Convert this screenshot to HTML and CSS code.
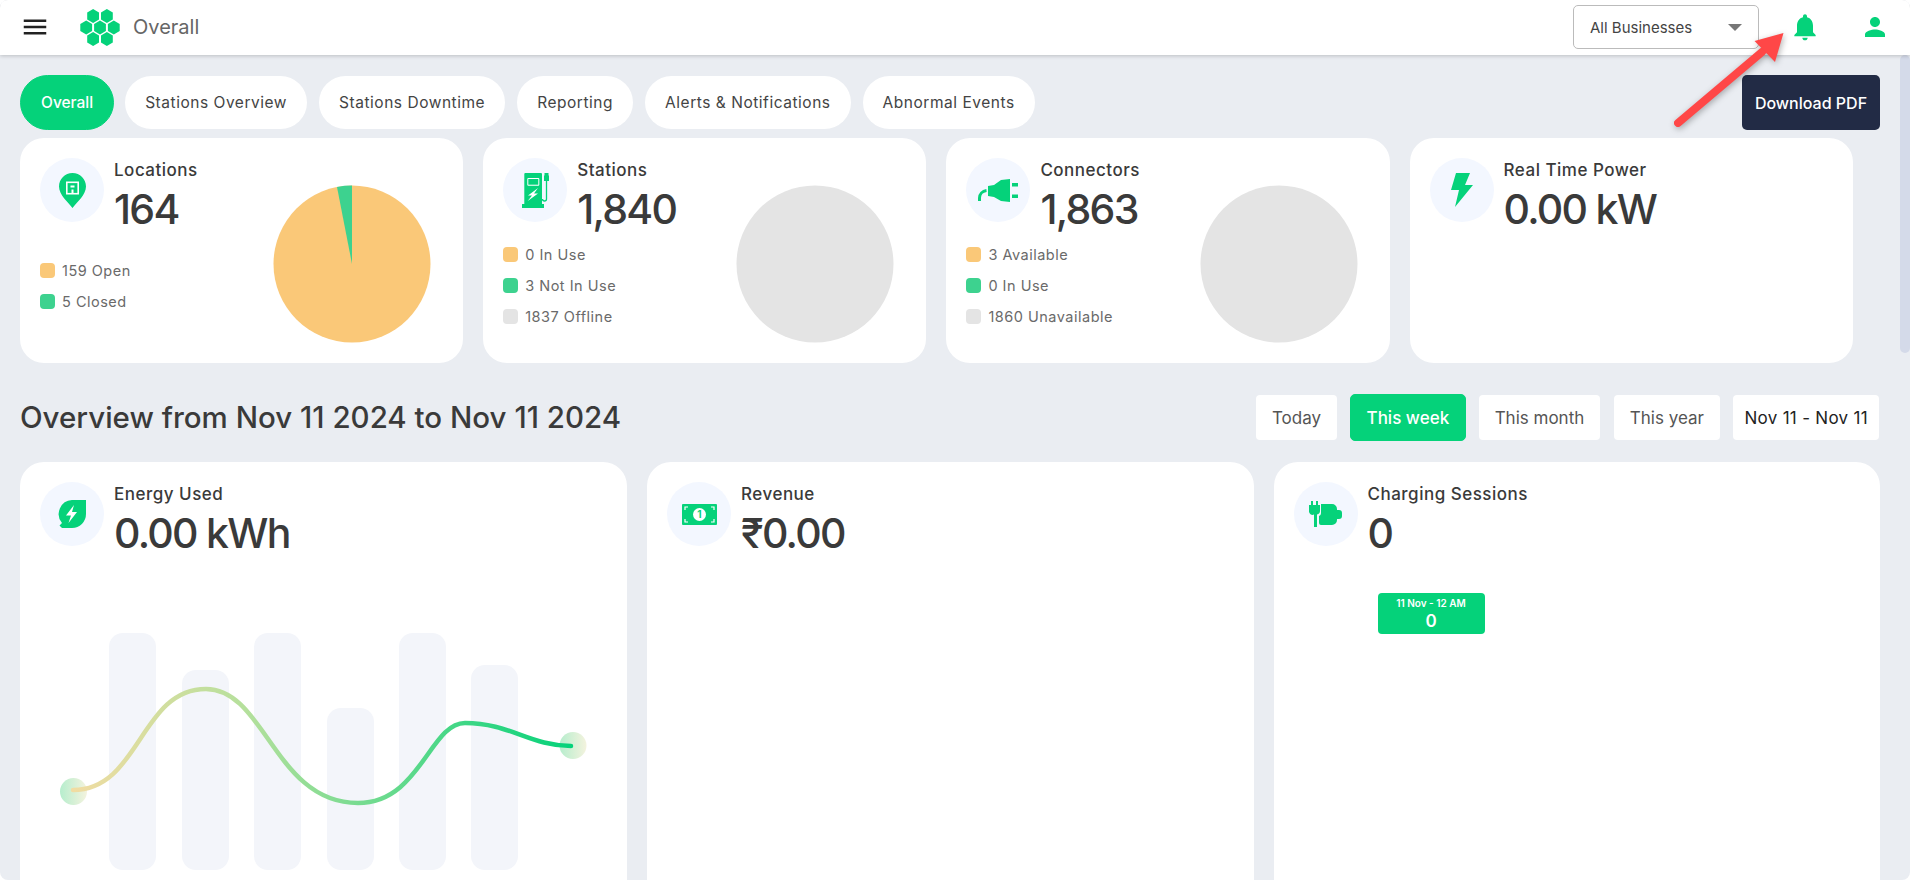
FILE: index.html
```html
<!DOCTYPE html>
<html lang="en">

<head>
    <meta charset="UTF-8">
    <meta name="viewport" content="width=device-width, initial-scale=1.0">
    <title>Overall</title>
    <link rel="stylesheet" href="styles.css">
</head>

<body>
    <div class="app">
        <header class="topbar">
            <svg class="menu-icon" viewBox="0 0 24 24"><path d="M3 18h18v-2H3v2zm0-5h18v-2H3v2zm0-7v2h18V6H3z"/></svg>
            <svg class="logo" viewBox="0 0 40 37">
                <defs><polygon id="hex" points="0,-6.900 5.900,-3.450 5.900,3.450 0,6.900 -5.900,3.450 -5.900,-3.450"/></defs>
                <use href="#hex" x="13.100" y="7"/>
                <use href="#hex" x="26.900" y="7"/>
                <use href="#hex" x="6.200" y="18.500"/>
                <use href="#hex" x="20" y="18.500"/>
                <use href="#hex" x="33.800" y="18.500"/>
                <use href="#hex" x="13.100" y="30"/>
                <use href="#hex" x="26.900" y="30"/>
            </svg>
            <span class="page-title">Overall</span>
            <div class="business-select">All Businesses<span class="caret"></span></div>
            <svg class="bell-icon" viewBox="0 0 24 24"><path d="M12 22c1.100 0 2-.9 2-2h-4c0 1.100.89 2 2 2zm6-6v-5c0-3.070-1.640-5.640-4.500-6.320V4c0-.83-.67-1.500-1.500-1.500s-1.500.67-1.500 1.500v.68C7.630 5.360 6 7.920 6 11v5l-2 2v1h16v-1l-2-2z"/></svg>
            <svg class="user-icon" viewBox="0 0 24 24"><path d="M12 12c2.210 0 4-1.790 4-4s-1.790-4-4-4-4 1.790-4 4 1.790 4 4 4zm0 2c-2.670 0-8 1.340-8 4v2h16v-2c0-2.660-5.330-4-8-4z"/></svg>
        </header>

        <main class="content">
            <div class="tab-row">
                <nav class="tabs">
                    <a class="tab active">Overall</a>
                    <a class="tab">Stations Overview</a>
                    <a class="tab">Stations Downtime</a>
                    <a class="tab">Reporting</a>
                    <a class="tab">Alerts &amp; Notifications</a>
                    <a class="tab">Abnormal Events</a>
                </nav>
                <button class="download-btn">Download PDF</button>
            </div>

            <section class="summary-row">
                <div class="card summary-card">
                    <div class="card-left">
                        <div class="card-head">
                            <div class="icon-circle">
                                <svg width="27" height="35" viewBox="0 0 27 35">
                                    <path class="green" d="M13.500 0C6 0 0 6 0 13.500 0 22 9 29 13.500 35 18 29 27 22 27 13.500 27 6 21 0 13.500 0z"/>
                                    <rect x="7.800" y="9.300" width="11.400" height="11.400" fill="none" stroke="#fff" stroke-width="1.600"/>
                                    <rect x="11.500" y="12.500" width="4" height="2" class="white"/>
                                    <rect x="12.500" y="16.500" width="2" height="4" class="white"/>
                                </svg>
                            </div>
                            <div>
                                <div class="card-title">Locations</div>
                                <div class="card-value">164</div>
                            </div>
                        </div>
                        <ul class="legend">
                            <li><span class="swatch orange"></span>159 Open</li>
                            <li><span class="swatch mint"></span>5 Closed</li>
                        </ul>
                    </div>
                    <svg class="pie" viewBox="-80 -80 160 160">
                        <circle r="78.500" fill="#fac878"/>
                        <path d="M0 0L-15 -77.060A78.500 78.500 0 0 1 0 -78.500z" fill="#3dd28f"/>
                    </svg>
                </div>

                <div class="card summary-card">
                    <div class="card-left">
                        <div class="card-head">
                            <div class="icon-circle">
                                <svg width="27" height="35" viewBox="0 0 27 35">
                                    <path class="green" d="M2.300 1a1 1 0 0 1 1-1h15.700a1 1 0 0 1 1 1v30h2v4H0v-4h2.300z"/>
                                    <rect x="5.300" y="5" width="12" height="7.700" rx="1" class="white"/>
                                    <rect x="6.300" y="6" width="10" height="5.700" class="green"/>
                                    <path class="white" d="M16 15L6 22.500h4L5.700 28 16 20.500h-4z"/>
                                    <path d="M24.500 8v18a2 2 0 0 1-4 0" fill="none" stroke="#05d27a" stroke-width="1.300"/>
                                    <path class="green" d="M22.500 0h4v2.500h.5V8h-5V2.500h.5z"/>
                                </svg>
                            </div>
                            <div>
                                <div class="card-title">Stations</div>
                                <div class="card-value">1,840</div>
                            </div>
                        </div>
                        <ul class="legend">
                            <li><span class="swatch orange"></span>0 In Use</li>
                            <li><span class="swatch mint"></span>3 Not In Use</li>
                            <li><span class="swatch grey"></span>1837 Offline</li>
                        </ul>
                    </div>
                    <svg class="pie" viewBox="-80 -80 160 160"><circle r="78.500" fill="#e4e4e4"/></svg>
                </div>

                <div class="card summary-card">
                    <div class="card-left">
                        <div class="card-head">
                            <div class="icon-circle">
                                <svg width="40" height="23" viewBox="0 0 40 23">
                                    <path class="green" d="M10 7l6-1 7-5 9-1v23l-9-1-7-4-6-1z"/>
                                    <path class="green" d="M34 4h6v3.500h-6zM34 15.500h6v3.500h-6z"/>
                                    <path d="M1.500 22v-3c0-4 3-7 7-7.500" fill="none" stroke="#05d27a" stroke-width="3"/>
                                </svg>
                            </div>
                            <div>
                                <div class="card-title">Connectors</div>
                                <div class="card-value">1,863</div>
                            </div>
                        </div>
                        <ul class="legend">
                            <li><span class="swatch orange"></span>3 Available</li>
                            <li><span class="swatch mint"></span>0 In Use</li>
                            <li><span class="swatch grey"></span>1860 Unavailable</li>
                        </ul>
                    </div>
                    <svg class="pie" viewBox="-80 -80 160 160"><circle r="78.500" fill="#e4e4e4"/></svg>
                </div>

                <div class="card summary-card">
                    <div class="card-left">
                        <div class="card-head">
                            <div class="icon-circle">
                                <svg width="28" height="36" viewBox="0 0 28 36"><path class="green" d="M8 1h14l-5 12h8L7 35l4-17H3z"/></svg>
                            </div>
                            <div>
                                <div class="card-title">Real Time Power</div>
                                <div class="card-value">0.00 kW</div>
                            </div>
                        </div>
                    </div>
                </div>
            </section>

            <div class="overview-head">
                <h2>Overview from Nov 11 2024 to Nov 11 2024</h2>
                <div class="ranges">
                    <button class="range">Today</button>
                    <button class="range active">This week</button>
                    <button class="range">This month</button>
                    <button class="range">This year</button>
                    <button class="range date">Nov 11 - Nov 11</button>
                </div>
            </div>

            <section class="detail-row">
                <div class="card detail-card">
                    <div class="card-head">
                        <div class="icon-circle">
                            <svg width="28" height="28" viewBox="0 0 28 28">
                                <path class="green" d="M28 0v14a14 14 0 0 1-14 14H7.500L4 28 1.500 25.500 4 23A14 14 0 0 1 14 0z"/>
                                <path class="white" d="M16 5L8 15.500h5L10.500 23 19 12h-5z"/>
                            </svg>
                        </div>
                        <div>
                            <div class="card-title">Energy Used</div>
                            <div class="card-value">0.00 kWh</div>
                        </div>
                    </div>
                    <!-- viewBox uses page coordinates so bars line up with the card -->
                    <svg class="energy-chart" viewBox="40 560 567 320">
                        <defs>
                            <linearGradient id="lineGrad" gradientUnits="userSpaceOnUse" x1="73" y1="0" x2="571" y2="0">
                                <stop offset="0" stop-color="#f1dca2"/>
                                <stop offset="0.35" stop-color="#b4e09c"/>
                                <stop offset="1" stop-color="#05d27a"/>
                            </linearGradient>
                            <linearGradient id="dotGrad">
                                <stop offset="0" stop-color="#b6edcd"/>
                                <stop offset="1" stop-color="#f4f3de"/>
                            </linearGradient>
                        </defs>
                        <g fill="#f3f5fa">
                            <rect x="109" y="633" width="47" height="237" rx="14"/>
                            <rect x="182" y="670" width="47" height="200" rx="14"/>
                            <rect x="254" y="633" width="47" height="237" rx="14"/>
                            <rect x="327" y="708" width="47" height="162" rx="14"/>
                            <rect x="399" y="633" width="47" height="237" rx="14"/>
                            <rect x="471" y="665" width="47" height="205" rx="14"/>
                        </g>
                        <ellipse cx="73.500" cy="791.500" rx="13.500" ry="13.500" fill="url(#dotGrad)"/>
                        <ellipse cx="573" cy="745.500" rx="13.500" ry="13.500" fill="url(#dotGrad)"/>
                        <path d="M73 790C140 790 140 689 206 689C265 689 275 803 358 803C420 803 430 723 465 723C510 723 530 746 571 746" fill="none" stroke="url(#lineGrad)" stroke-width="4.500" stroke-linecap="round"/>
                    </svg>
                </div>

                <div class="card detail-card">
                    <div class="card-head">
                        <div class="icon-circle">
                            <svg width="35" height="21" viewBox="0 0 35 21">
                                <rect width="35" height="21" rx="1" class="green"/>
                                <circle cx="17.500" cy="10.500" r="6.500" class="white"/>
                                <path d="M3 6V3h3M32 6V3h-3M3 15v3h3M32 15v3h-3" fill="none" stroke="#fff" stroke-width="1.200"/>
                                <text x="17.500" y="14" text-anchor="middle" class="note-digit">1</text>
                            </svg>
                        </div>
                        <div>
                            <div class="card-title">Revenue</div>
                            <div class="card-value">₹0.00</div>
                        </div>
                    </div>
                </div>

                <div class="card detail-card sessions-card">
                    <div class="card-head">
                        <div class="icon-circle">
                            <svg width="33" height="26" viewBox="0 0 33 26">
                                <path class="green" d="M2 0h2v4h3V0h2v4h2v6a3.500 3.500 0 0 1-3 3.500V26H5V13.500A3.500 3.500 0 0 1 0 10V4h2z"/>
                                <path class="green" d="M12 3h11a5 5 0 0 1 5 5v1h2a3 3 0 0 1 3 3v3a3 3 0 0 1-3 3h-2v1a5 5 0 0 1-5 5H12a2 2 0 0 1-2-2V15a3 3 0 0 0 2-3z"/>
                            </svg>
                        </div>
                        <div>
                            <div class="card-title">Charging Sessions</div>
                            <div class="card-value">0</div>
                        </div>
                    </div>
                    <div class="chart-tip">
                        <span class="tip-label">11 Nov - 12 AM</span>
                        <span class="tip-value">0</span>
                    </div>
                </div>
            </section>
        </main>

        <div class="scroll-thumb"></div>

        <!-- annotation drawn over the screenshot -->
        <svg class="red-arrow" viewBox="1660 20 140 120">
            <path d="M1678 123L1762 52" fill="none" stroke="#ff4747" stroke-width="8" stroke-linecap="round"/>
            <polygon points="1783.500,33 1754.500,41 1775,62" fill="#ff4747"/>
        </svg>
    </div>
</body>

</html>
```

FILE: styles.css
```css
* {
    box-sizing: border-box;
}

body {
    margin: 0;
    padding: 0;
    height: 100vh;
    overflow: hidden;
    background: #fff;
    font-family: "Inter", sans-serif;
    color: #3a3a3a;
}

.app {
    position: relative;
    height: 100vh;
    display: flex;
    flex-direction: column;
    background: #eaedf2;
    border-radius: 8px;
    overflow: hidden;
}

.topbar {
    height: 55px;
    flex-shrink: 0;
    display: flex;
    align-items: center;
    padding: 0 20px 1px;
    background: #fff;
    box-shadow: 0 1px 4px rgba(0, 0, 0, 0.2);
    z-index: 2;
}

.menu-icon {
    width: 30px;
    height: 30px;
    fill: #222;
}

.logo {
    width: 40px;
    height: 37px;
    margin-left: 30px;
    fill: #05d27a;
}

.page-title {
    margin-left: 13px;
    font-size: 20px;
    color: #666;
}

.business-select {
    margin-left: auto;
    width: 186px;
    height: 44px;
    padding: 0 16px;
    display: flex;
    align-items: center;
    justify-content: space-between;
    border: 1px solid #bbb;
    border-radius: 5px;
    font-size: 15px;
    color: #444;
}

.caret {
    width: 0;
    height: 0;
    border-left: 7px solid transparent;
    border-right: 7px solid transparent;
    border-top: 7px solid #777;
}

.bell-icon {
    width: 32px;
    height: 32px;
    margin-left: 30px;
    fill: #05d27a;
}

.user-icon {
    width: 30px;
    height: 30px;
    margin-left: 39px;
    fill: #05d27a;
}

.content {
    flex: 1;
    min-height: 0;
    padding: 20px 30px 0 20px;
    overflow: hidden;
}

.scroll-thumb {
    position: absolute;
    right: 0;
    top: 55px;
    width: 10px;
    height: 298px;
    background: #d4dae9;
    border-radius: 5px;
}

.tab-row {
    display: flex;
    justify-content: space-between;
}

.tabs {
    display: flex;
    gap: 10px;
}

.tab {
    height: 55px;
    padding: 0 20px;
    display: flex;
    align-items: center;
    border: 1px solid transparent;
    border-radius: 28px;
    background: #fff;
    background-clip: padding-box;
    font-size: 15.500px;
    letter-spacing: 0.53px;
    color: #444;
}

.tab.active {
    background: #05d27a;
    border-color: #05d27a;
    color: #fff;
    font-weight: 500;
    letter-spacing: 0;
}

.download-btn {
    width: 138px;
    height: 55px;
    border: none;
    border-radius: 5px;
    background: #222b45;
    color: #fff;
    font-family: inherit;
    font-size: 16px;
    font-weight: 500;
}

.summary-row {
    display: flex;
    gap: 20px;
    margin-top: 8px;
}

.card {
    background: #fff;
    border-radius: 24px;
}

.summary-card {
    width: 443.200px;
    height: 225px;
    padding: 20px 32px 14px 20px;
    display: flex;
    justify-content: space-between;
}

.card-left {
    display: flex;
    flex-direction: column;
}

.card-head {
    display: flex;
    gap: 10px;
    height: 64px;
}

.icon-circle {
    width: 64px;
    height: 64px;
    flex-shrink: 0;
    display: flex;
    align-items: center;
    justify-content: center;
    border-radius: 50%;
    background: #f3f7ff;
}

.green {
    fill: #05d27a;
}

.white {
    fill: #fff;
}

.note-digit {
    font-family: "Inter", sans-serif;
    font-size: 10px;
    font-weight: 700;
    fill: #05d27a;
}

.card-title {
    height: 24px;
    line-height: 24px;
    font-size: 17px;
    font-weight: 500;
    letter-spacing: 0.5px;
    color: #3a3a3a;
}

.card-value {
    height: 48px;
    margin-top: 3px;
    line-height: 48px;
    font-size: 41px;
    font-weight: 500;
    letter-spacing: -1.700px;
    color: #3a3a3a;
}

.legend {
    flex: 1;
    margin: 0;
    padding: 0;
    list-style: none;
    display: flex;
    flex-direction: column;
    justify-content: center;
    gap: 16px;
}

.legend li {
    height: 15px;
    display: flex;
    align-items: center;
    gap: 7px;
    font-size: 14.500px;
    letter-spacing: 0.5px;
    color: #6a6a6a;
}

.swatch {
    width: 15px;
    height: 15px;
    border-radius: 4px;
}

.orange {
    background: #fac878;
}

.mint {
    background: #3dd28f;
}

.grey {
    background: #e4e4e4;
}

.pie {
    width: 160px;
    height: 160px;
    margin-top: 26px;
    margin-right: -1px;
}

.overview-head {
    display: flex;
    align-items: center;
    justify-content: space-between;
    margin-top: 31px;
}

.overview-head h2 {
    margin: 0 0 2px;
    font-size: 29.500px;
    font-weight: 500;
    color: #3a3a3a;
}

.ranges {
    display: flex;
    gap: 11.500px;
}

.range {
    height: 47px;
    padding: 0 16px;
    border: 1px solid transparent;
    border-radius: 5px;
    background: #fff;
    background-clip: padding-box;
    font-family: inherit;
    font-size: 17px;
    color: #555;
}

.range.active {
    background: #05d27a;
    border-color: #05d27a;
    color: #fff;
    font-weight: 500;
}

.range.date {
    padding: 0 11px;
    font-size: 17px;
    letter-spacing: 0.3px;
    color: #222;
}

.detail-row {
    display: grid;
    grid-template-columns: repeat(3, 1fr);
    gap: 20px;
    margin-top: 21px;
}

.detail-card {
    height: 500px;
    padding: 20px;
}

.energy-chart {
    display: block;
    width: 567px;
    height: 320px;
    margin-top: 14px;
}

.sessions-card {
    position: relative;
}

.chart-tip {
    position: absolute;
    left: 104px;
    top: 131px;
    width: 107px;
    height: 41px;
    display: flex;
    flex-direction: column;
    align-items: center;
    justify-content: center;
    gap: 2px;
    border-radius: 4px;
    background: #05d27a;
    color: #fff;
}

.tip-label {
    font-size: 10px;
    font-weight: 600;
}

.tip-value {
    font-size: 17px;
    font-weight: 600;
    line-height: 20px;
}

.red-arrow {
    position: absolute;
    left: 1660px;
    top: 20px;
    width: 140px;
    height: 120px;
    z-index: 3;
    filter: drop-shadow(1px 2px 3px rgba(0, 0, 0, 0.3));
}
```
